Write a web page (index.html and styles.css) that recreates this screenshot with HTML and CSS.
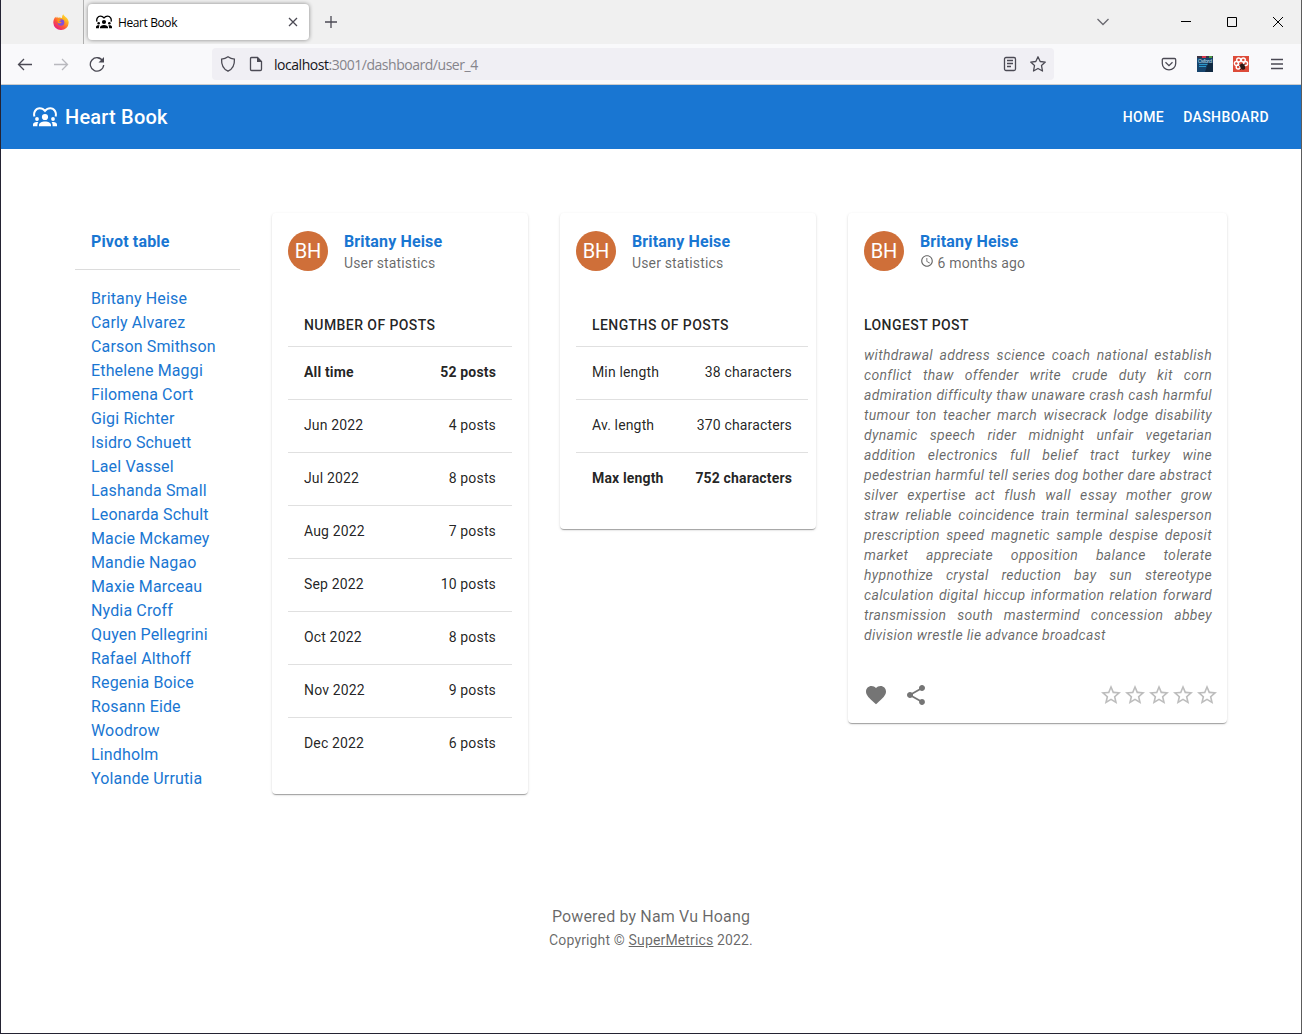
FILE: index.html
```html
<!DOCTYPE html>
<html lang="en">
<head>
<meta charset="utf-8">
<title>Heart Book</title>
<link rel="stylesheet" href="styles.css">
</head>
<body>
<svg class="defs" aria-hidden="true">
  <symbol id="people" viewBox="0 0 24 20">
    <path d="M1.4 9.5C.2 5.5 2.7 1.2 6.7 1.2c2.2 0 4 1 5.3 2.7 1.300-1.700 3.100-2.700 5.300-2.700 4 0 6.500 4.300 5.300 8.300" fill="none" stroke="currentColor" stroke-width="2"/>
    <circle cx="12" cy="10" r="3.100"/><circle cx="4" cy="12" r="1.900"/><circle cx="20" cy="12" r="1.900"/>
    <path d="M6 19.200v-1.200c0-2 2.700-3.500 6-3.500s6 1.500 6 3.500v1.200zM0 19.200v-1.800c0-1.500 1.600-2.500 3.500-2.500.7 0 1.300.1 1.900.3-.7.800-1 1.800-1 2.800v1.200zM24 19.200v-1.800c0-1.500-1.600-2.500-3.500-2.500-.7 0-1.300.1-1.900.3.7.8 1 1.800 1 2.800v1.200z"/>
  </symbol>
  <symbol id="star" viewBox="0 0 24 24"><path d="M22 9.240l-7.190-.62L12 2 9.190 8.630 2 9.240l5.460 4.730L5.820 21 12 17.270 18.180 21l-1.630-7.030L22 9.240zM12 15.400l-3.760 2.270 1-4.280-3.320-2.880 4.380-.38L12 6.100l1.710 4.040 4.380.38-3.320 2.880 1 4.280L12 15.400z"/></symbol>
</svg>
<div class="window">
  <div class="tabs">
    <div class="pinned">
      <svg width="16" height="16" viewBox="0 0 16 16">
        <defs><linearGradient id="fox" x1="1" y1="0" x2=".2" y2="1"><stop offset="0" stop-color="#fff44f"/><stop offset=".35" stop-color="#ffb31d"/><stop offset=".65" stop-color="#ff5a36"/><stop offset="1" stop-color="#e3158c"/></linearGradient></defs>
        <path d="M10.300.200c.3 1.600 2 2.200 3.200 3.500 1.300 1.300 2.200 3 2.200 5A7.600 7.600 0 0 1 8 16a7.600 7.600 0 0 1-7.700-7.300c0-2.400.8-4.300 2.200-5.900l.5 1.400 1-1.600.9 1.300c1.700-.7 3.300-.2 4.200.4-.2-1.500.1-2.900 1.200-4.100z" fill="url(#fox)"/>
        <circle cx="8" cy="8.500" r="3.300" fill="#8550d8"/><path d="M4 5.800c1.500-1 3.200-.7 4.300.4-1 .2-1.500.7-2.300 1.200.7.800 1.700.8 2.700.6-.6 1.400-2 1.700-3.600 1z" fill="#ff980e"/>
      </svg>
    </div>
    <div class="tab">
      <svg class="tab-icon" width="16" height="14"><use href="#people"/></svg>
      <span class="tab-title">Heart Book</span>
      <svg width="10" height="10" viewBox="0 0 10 10" class="line"><path d="M1 1l8 8M9 1L1 9"/></svg>
    </div>
    <svg class="plus line" width="12" height="12" viewBox="0 0 12 12"><path d="M6 0v12M0 6h12"/></svg>
    <div class="controls">
      <svg class="line gray" width="12" height="8" viewBox="0 0 12 8"><path d="M.5 1L6 6.500 11.500 1"/></svg>
      <svg class="line black" width="10" height="10" viewBox="0 0 10 10"><path d="M0 4.500h10"/></svg>
      <svg class="line black" width="10" height="10" viewBox="0 0 10 10"><path d="M.5.5h9v9h-9z"/></svg>
      <svg class="line black" width="10" height="10" viewBox="0 0 10 10"><path d="M0 0l10 10M10 0L0 10"/></svg>
    </div>
  </div>
  <div class="toolbar">
    <div class="nav">
      <svg class="line" width="16" height="16" viewBox="0 0 16 16"><path d="M15 8.500H1.500M7 3L1.500 8.500 7 14"/></svg>
      <svg class="line faded" width="16" height="16" viewBox="0 0 16 16"><path d="M1 8.500h13.500M9 3l5.500 5.500L9 14"/></svg>
      <svg class="line" width="16" height="16" viewBox="0 0 16 16"><path d="M13.800 5A6.700 6.700 0 1 0 14.700 9"/><path d="M15 1v5.500H9.500z" fill="currentColor" stroke="none"/></svg>
    </div>
    <div class="address">
      <svg class="line" width="16" height="16" viewBox="0 0 16 16"><path d="M8 .8c2 1.400 4 2.100 6.400 2.300.3 5-1.400 9.800-6.400 12.100C3 12.900 1.300 8.100 1.600 3.100 4 2.900 6 2.200 8 .8z"/></svg>
      <svg class="line" width="16" height="16" viewBox="0 0 16 16"><path d="M3.500 1.500h6l4 4v7.800c0 .8-.4 1.200-1.200 1.200H3.700c-.8 0-1.200-.4-1.200-1.200V2.700c0-.8.4-1.200 1-1.200z"/><path d="M9 1l5 5H9z" fill="currentColor" stroke="none"/></svg>
      <span class="url"><b>localhost</b>:3001/dashboard/user_4</span>
      <svg class="line" width="16" height="16" viewBox="0 0 16 16"><rect x="2.500" y="1.500" width="11" height="13" rx="1.500"/><path d="M5 4.500h6M5 7.500h6M5 10.500h4"/></svg>
      <svg class="line" width="16" height="16" viewBox="0 0 16 16"><path d="M8 .8l2.200 4.700 5.100.6-3.800 3.500 1 5.400L8 12.500 3.500 15l1-5.400L.7 6.100l5.100-.6z" stroke-linejoin="round"/></svg>
    </div>
    <div class="tools">
      <svg class="line" width="16" height="16" viewBox="0 0 16 16"><path d="M2.500 2.500h11c.7 0 1.200.5 1.200 1.200V7.500a6.700 6.300 0 0 1-13.400 0V3.700c0-.7.5-1.200 1.200-1.200zM4.500 6.300L8 9.600l3.500-3.300"/></svg>
      <svg width="16" height="16" viewBox="0 0 16 16"><path d="M0 0h16v16H0z" fill="#17456e"/><path d="M0 0h16v2H0z" fill="#3c3445"/><path d="M5 0h4v2H5z" fill="#d9364b"/><path d="M12 0h3v2h-3z" fill="#4e9c45"/><text x="1" y="6.500" font-size="5" font-family="Open Sans, sans-serif" fill="#c9e5f5" textLength="14">Oxford</text><path d="M2 8.500h10M2 10.500h7" stroke="#2c98cb"/><path d="M11 7h5v9h-8z" fill="#112941"/></svg>
      <svg width="16" height="16" viewBox="0 0 16 16"><path d="M0 0h16v16H0z" fill="#dd4b39"/><g fill="none" stroke="#fff" stroke-width="1.400"><circle cx="5.700" cy="4" r="2"/><circle cx="10.300" cy="4" r="2"/><circle cx="3.400" cy="7.500" r="2"/><circle cx="12.600" cy="7.500" r="2"/><circle cx="5.200" cy="11" r="2"/></g><ellipse cx="9.600" cy="10.700" rx="2.300" ry="3.200" fill="#2b1918" transform="rotate(-25 9.600 10.700)"/><path d="M6 9l6 4M12 8l-5 6" stroke="#2b1918" stroke-width=".8"/></svg>
      <svg class="line" width="12" height="12" viewBox="0 0 12 12"><path d="M0 1.500h12M0 6h12M0 10.500h12"/></svg>
    </div>
  </div>
  <header class="appbar">
    <svg width="24" height="20"><use href="#people"/></svg>
    <span class="brand">Heart Book</span>
    <nav class="links"><a>HOME</a><a>DASHBOARD</a></nav>
  </header>
  <main class="grid">
    <aside class="sidebar">
      <div class="pivot">Pivot table</div>
      <ul class="users">
        <li>Britany Heise</li><li>Carly Alvarez</li><li>Carson Smithson</li><li>Ethelene Maggi</li><li>Filomena Cort</li><li>Gigi Richter</li><li>Isidro Schuett</li><li>Lael Vassel</li><li>Lashanda Small</li><li>Leonarda Schult</li><li>Macie Mckamey</li><li>Mandie Nagao</li><li>Maxie Marceau</li><li>Nydia Croff</li><li>Quyen Pellegrini</li><li>Rafael Althoff</li><li>Regenia Boice</li><li>Rosann Eide</li><li>Woodrow Lindholm</li><li>Yolande Urrutia</li>
      </ul>
    </aside>
    <section class="card">
      <div class="head"><div class="avatar">BH</div><div><div class="name">Britany Heise</div><div class="sub">User statistics</div></div></div>
      <div class="stats">
        <div class="caption">NUMBER OF POSTS</div>
        <div class="row strong"><span>All time</span><span>52 posts</span></div>
        <div class="row"><span>Jun 2022</span><span>4 posts</span></div>
        <div class="row"><span>Jul 2022</span><span>8 posts</span></div>
        <div class="row"><span>Aug 2022</span><span>7 posts</span></div>
        <div class="row"><span>Sep 2022</span><span>10 posts</span></div>
        <div class="row"><span>Oct 2022</span><span>8 posts</span></div>
        <div class="row"><span>Nov 2022</span><span>9 posts</span></div>
        <div class="row"><span>Dec 2022</span><span>6 posts</span></div>
      </div>
    </section>
    <section class="card">
      <div class="head"><div class="avatar">BH</div><div><div class="name">Britany Heise</div><div class="sub">User statistics</div></div></div>
      <div class="stats wide">
        <div class="caption">LENGTHS OF POSTS</div>
        <div class="row"><span>Min length</span><span>38 characters</span></div>
        <div class="row"><span>Av. length</span><span>370 characters</span></div>
        <div class="row strong"><span>Max length</span><span>752 characters</span></div>
      </div>
    </section>
    <section class="card">
      <div class="head"><div class="avatar">BH</div><div><div class="name">Britany Heise</div><div class="sub"><svg class="clock" width="14" height="14" viewBox="0 0 24 24"><path d="M11.990 2C6.470 2 2 6.480 2 12s4.470 10 9.990 10C17.520 22 22 17.520 22 12S17.520 2 11.990 2zM12 20c-4.420 0-8-3.580-8-8s3.580-8 8-8 8 3.580 8 8-3.580 8-8 8zm.5-13H11v6l5.250 3.150.75-1.230-4.500-2.670z"/></svg> 6 months ago</div></div></div>
      <div class="post">
        <div class="post-title">LONGEST POST</div>
        <p>withdrawal address science coach national establish conflict thaw offender write crude duty kit corn admiration difficulty thaw unaware crash cash harmful tumour ton teacher march wisecrack lodge disability dynamic speech rider midnight unfair vegetarian addition electronics full belief tract turkey wine pedestrian harmful tell series dog bother dare abstract silver expertise act flush wall essay mother grow straw reliable coincidence train terminal salesperson prescription speed magnetic sample despise deposit market appreciate opposition balance tolerate hypnothize crystal reduction bay sun stereotype calculation digital hiccup information relation forward transmission south mastermind concession abbey division wrestle lie advance broadcast</p>
      </div>
      <div class="actions">
        <svg width="24" height="24" viewBox="0 0 24 24"><path d="M12 21.350l-1.450-1.320C5.400 15.360 2 12.280 2 8.500 2 5.420 4.420 3 7.500 3c1.740 0 3.410.81 4.500 2.090C13.090 3.810 14.760 3 16.500 3 19.580 3 22 5.420 22 8.500c0 3.780-3.400 6.860-8.550 11.540L12 21.350z"/></svg>
        <svg width="24" height="24" viewBox="0 0 24 24"><path d="M18 16.080c-.76 0-1.440.3-1.960.77L8.910 12.700c.05-.23.09-.46.09-.7s-.04-.47-.09-.7l7.050-4.110c.54.5 1.250.81 2.040.81 1.660 0 3-1.340 3-3s-1.340-3-3-3-3 1.340-3 3c0 .24.04.47.09.7L8.040 9.810C7.500 9.310 6.790 9 6 9c-1.660 0-3 1.340-3 3s1.340 3 3 3c.79 0 1.500-.31 2.040-.81l7.120 4.160c-.05.21-.08.43-.08.65 0 1.610 1.310 2.920 2.920 2.920s2.920-1.310 2.920-2.920-1.310-2.920-2.920-2.920z"/></svg>
        <div class="stars"><svg><use href="#star"/></svg><svg><use href="#star"/></svg><svg><use href="#star"/></svg><svg><use href="#star"/></svg><svg><use href="#star"/></svg></div>
      </div>
    </section>
  </main>
  <footer class="footer">
    <div class="powered">Powered by Nam Vu Hoang</div>
    <div class="copy">Copyright © <u>SuperMetrics</u> 2022.</div>
  </footer>
</div>
</body>
</html>
```
FILE: styles.css
```css
* { box-sizing: border-box; }
body { margin: 0; font-family: Roboto, sans-serif; color: rgba(0,0,0,.87); }
svg { display: block; flex: none; fill: currentColor; }
.defs { display: none; }
.window { height: 1034px; overflow: hidden; display: flex; flex-direction: column; background: #fff; border: solid #242333; border-width: 0 1px 1px; border-right-color: #5c5c5c; }
.line { fill: none; stroke: currentColor; stroke-width: 1.3; color: #4b4a54; }
.line.gray { color: #6a6970; }
.line.black { color: #000; stroke-width: 1; }
.line.faded { color: #b9b9be; }

.tabs { height: 44px; flex: none; display: flex; align-items: center; background: #f0f0f0; }
.pinned { width: 83px; height: 44px; border-right: 1px solid #b0b0b0; padding: 14px 0 0 52px; }
.tab { width: 221px; height: 36px; margin-left: 4px; padding: 0 11px 0 8px; background: #fff; border-radius: 4px; box-shadow: 0 0 4px rgba(0,0,0,.45); display: flex; align-items: center; color: #15141a; }
.tab-title { flex: 1; margin-left: 6px; font: 12px "Open Sans", sans-serif; letter-spacing: -.4px; color: #000; }
.tab-icon { color: #000; }
.plus { margin-left: 16px; }
.controls { margin-left: auto; display: flex; align-items: center; gap: 36px; padding-right: 18px; }
.controls svg:first-child { margin-right: 36px; }

.toolbar { height: 41px; flex: none; display: flex; align-items: center; background: #f9f9fb; border-bottom: 1px solid #ccc; }
.nav { width: 211px; display: flex; gap: 20px; padding-left: 16px; }
.address { width: 842px; height: 32px; padding: 0 8px; display: flex; align-items: center; gap: 12px; background: #f0eff4; border-radius: 4px; }
.url { flex: 1; font: 14px "Open Sans", sans-serif; color: #85848b; letter-spacing: -.47px; margin-left: -2px; padding-top: 1px; }
.url b { font-weight: 400; color: #15141a; }
.tools { margin-left: auto; padding-right: 18px; display: flex; align-items: center; gap: 20px; }
.tools svg:last-child { margin-left: 2px; }

.appbar { height: 64px; flex: none; padding: 0 32px; display: flex; align-items: center; background: #1976d2; color: #fff; }
.brand { margin-left: 8px; font-size: 20px; font-weight: 500; letter-spacing: .2px; }
.links { margin-left: auto; display: flex; gap: 19px; font-size: 14px; font-weight: 500; letter-spacing: .4px; }

.grid { display: grid; grid-template-columns: 165px 256px 256px 379px; gap: 32px; align-items: start; padding: 64px 0 0 74px; height: 756px; flex: none; }
.pivot { height: 57px; padding: 17px 16px 0; line-height: 24px; font-weight: 700; color: #1976d2; letter-spacing: .15px; border-bottom: 1px solid #dcdcdc; }
.users { list-style: none; margin: 0; padding: 17px 16px; line-height: 24px; color: #1976d2; letter-spacing: .15px; }
.card { background: #fff; border-radius: 4px; box-shadow: 0 2px 1px -1px rgba(0,0,0,.2), 0 1px 1px rgba(0,0,0,.14), 0 1px 3px rgba(0,0,0,.12); }
.head { display: flex; align-items: center; gap: 16px; padding: 16px; height: 76px; }
.avatar { width: 40px; height: 40px; border-radius: 50%; background: #cf6f39; color: #fff; font-size: 20px; display: flex; align-items: center; justify-content: center; }
.name { padding-top: 1px; font-size: 16px; line-height: 23px; font-weight: 700; color: #1976d2; letter-spacing: .15px; }
.sub { font-size: 14px; line-height: 20px; color: rgba(0,0,0,.6); letter-spacing: .15px; }
.clock { display: inline-block; vertical-align: 0; }
.stats { padding: 16px 16px 23px; }
.wide { padding-right: 8px; }
.caption { height: 42px; padding: 0 16px; line-height: 40px; font-size: 14px; font-weight: 500; letter-spacing: .42px; border-bottom: 1px solid #e0e0e0; }
.row { height: 53px; padding: 15px 16px; display: flex; justify-content: space-between; font-size: 14px; line-height: 20px; letter-spacing: .15px; border-bottom: 1px solid #e0e0e0; }
.row:last-child { border-bottom: 0; }
.strong { font-weight: 700; }
.post { padding: 16px 15px 22px 16px; }
.post-title { font-size: 14px; line-height: 40px; font-weight: 500; letter-spacing: .42px; }
.post p { margin: 0; font-size: 14px; line-height: 20px; font-style: italic; text-align: justify; letter-spacing: .33px; color: rgba(0,0,0,.6); }
.actions { height: 56px; padding: 0 8px 0 16px; display: flex; align-items: center; gap: 16px; color: #757575; }
.stars { margin-left: auto; display: flex; color: #bdbdbd; }
.stars svg { width: 24px; height: 24px; }
.footer { text-align: center; color: rgba(0,0,0,.6); }
.powered { font-size: 16px; line-height: 24px; letter-spacing: .15px; }
.copy { font-size: 14px; line-height: 22px; letter-spacing: .15px; }
```
